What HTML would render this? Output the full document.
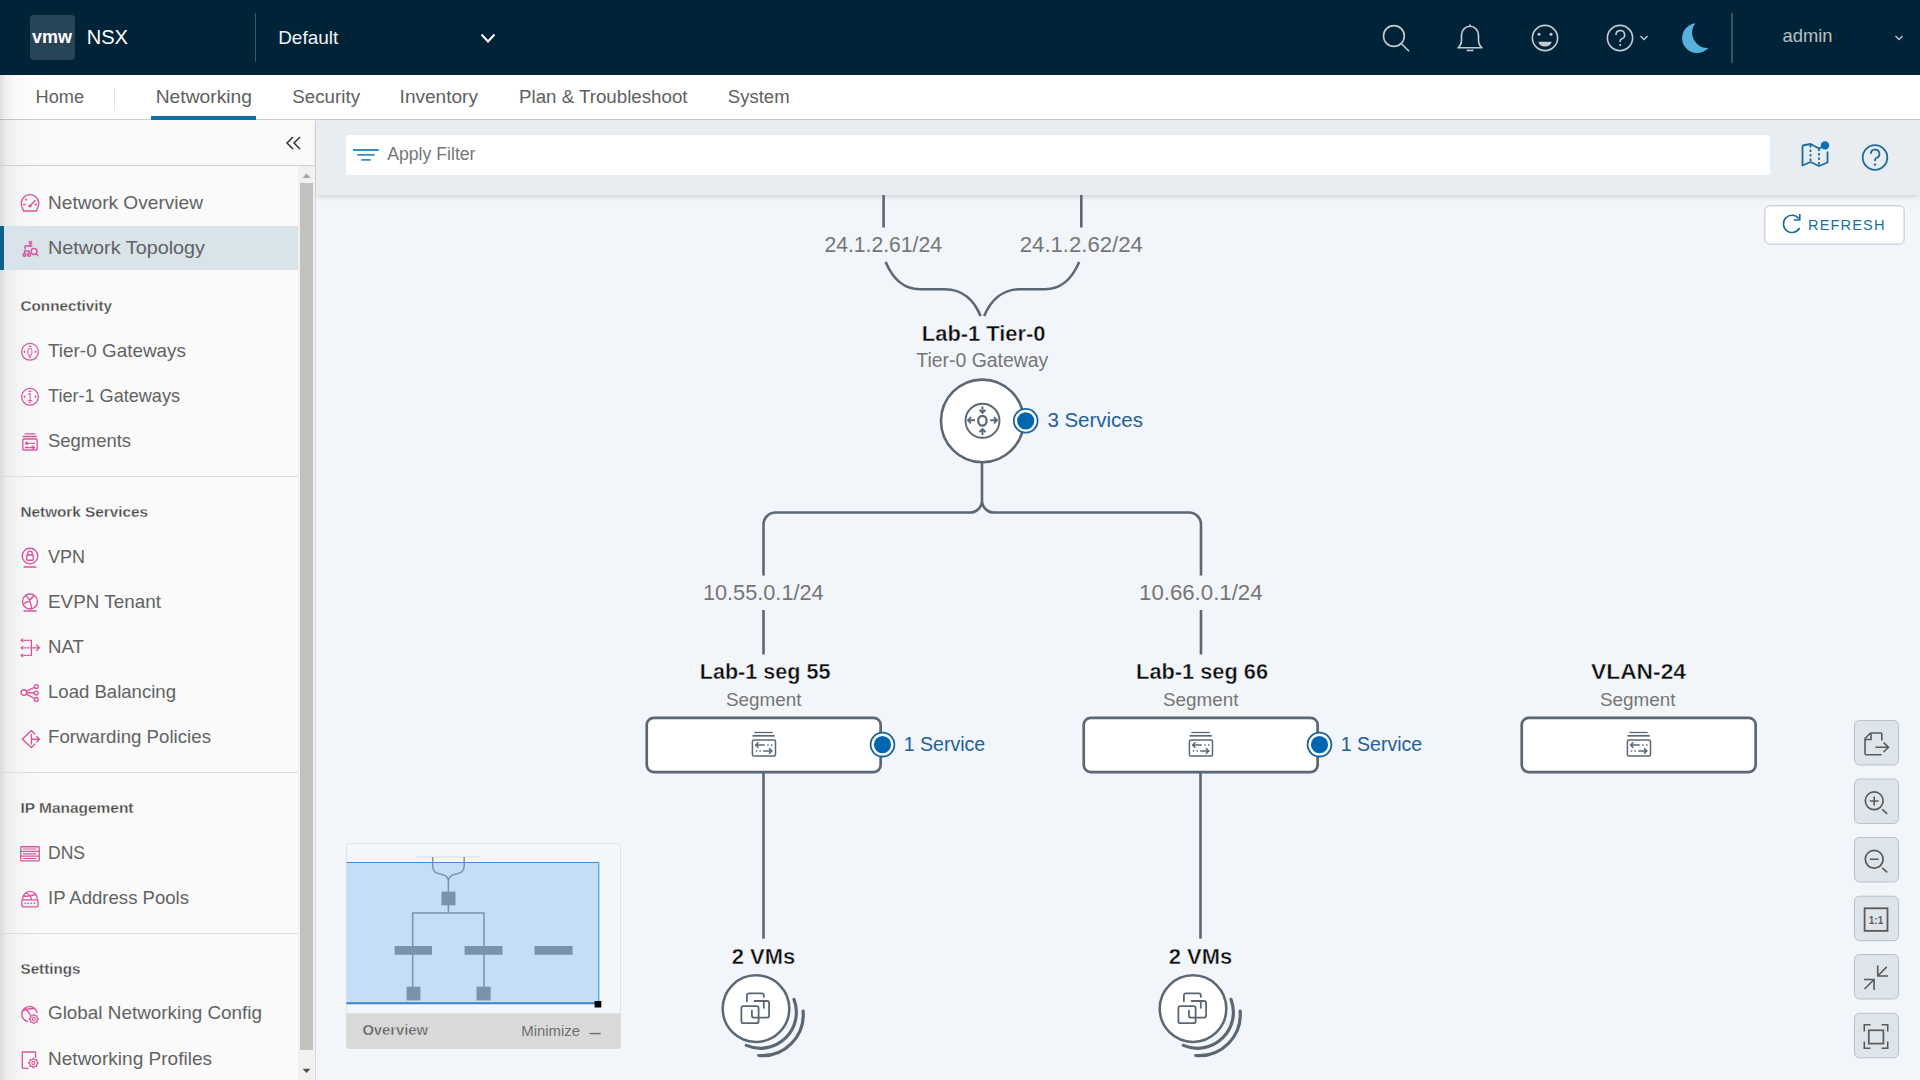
<!DOCTYPE html>
<html><head><meta charset="utf-8">
<style>
html,body{margin:0;padding:0;width:1920px;height:1080px;overflow:hidden;background:#f2f5f9;font-family:"Liberation Sans",sans-serif;}
.abs{position:absolute;}
#hdr{left:0;top:0;width:1920px;height:75px;background:#012337;}
#nav{left:0;top:75px;width:1920px;height:44px;background:#fff;border-bottom:1px solid #c9cdd0;}
#side{left:0;top:120px;width:315px;height:960px;background:#fafafa;}
#sideshadow{left:0;top:75px;width:48px;height:1005px;background:linear-gradient(to right,rgba(0,0,0,0.13) 0px,rgba(0,0,0,0.06) 6px,rgba(0,0,0,0.025) 16px,rgba(0,0,0,0.008) 32px,rgba(0,0,0,0) 48px);}
#sideborder{left:315px;top:120px;width:1px;height:960px;background:#d7dade;}
#filterbar{left:316px;top:120px;width:1604px;height:75px;background:#e7edf0;box-shadow:0 2px 5px rgba(0,0,0,0.13);}
#filterinput{left:346px;top:135px;width:1424px;height:40px;background:#fff;border-radius:2px;}
#canvas{left:316px;top:195px;width:1604px;height:885px;background:#f2f5f9;}
svg{position:absolute;left:0;top:0;}
</style></head>
<body>
<div id="hdr" class="abs"></div>
<div id="nav" class="abs"></div>
<div id="side" class="abs"></div>
<div id="sideborder" class="abs"></div>
<div id="canvas" class="abs"></div>
<div id="filterbar" class="abs"></div>
<div id="filterinput" class="abs"></div>
<div id="sideshadow" class="abs"></div>
<svg width="1920" height="1080" viewBox="0 0 1920 1080" font-family="Liberation Sans, sans-serif">
<!-- HEADER -->
<rect x="30" y="15" width="45" height="45" rx="4" fill="#284558"/>
<text x="32" y="43" font-size="18" font-weight="700" fill="#fff" textLength="40" lengthAdjust="spacingAndGlyphs">vmw</text>
<text x="86.7" y="44" font-size="20" fill="#fff" textLength="41.3" lengthAdjust="spacingAndGlyphs">NSX</text>
<rect x="255" y="13" width="1" height="49" fill="#3d5566"/>
<text x="278.2" y="44" font-size="19" fill="#f0f4f7" textLength="60" lengthAdjust="spacingAndGlyphs">Default</text>
<path d="M481.5 34.5 L488 41.5 L494.5 34.5" fill="none" stroke="#fff" stroke-width="2"/>

<!-- header right icons -->
<g fill="none" stroke="#c3ccd2" stroke-width="1.6">
<circle cx="1393.9" cy="36" r="10.4"/>
<path d="M1401.5 43.8 L1409 51.2"/>
<path d="M1458 47.8 L1482 47.8 Q1478.5 45 1478.5 40 L1478.5 35 A8.5 8.7 0 0 0 1461.5 35 L1461.5 40 Q1461.5 45 1458 47.8 Z" stroke-linejoin="round"/>
<path d="M1467.5 49.5 L1467.5 50.5 L1472.5 50.5 L1472.5 49.5"/>
<path d="M1470 24.5 L1470 26.5"/>
<circle cx="1545" cy="38" r="12.6"/>
<circle cx="1620" cy="38" r="12.6"/>
<path d="M1616 35 A4.3 4.3 0 1 1 1621.5 39 Q1620.2 39.6 1620.2 41 L1620.2 42"/>
<path d="M1640.5 36 L1644 39.5 L1647.5 36" stroke-width="1.3"/>
<path d="M1895.5 36 L1899 39.5 L1902.5 36" stroke-width="1.3"/>
</g>
<circle cx="1539" cy="34.3" r="1.5" fill="#c3ccd2"/>
<circle cx="1551" cy="34.3" r="1.5" fill="#c3ccd2"/>
<path d="M1538.3 41.7 L1551.7 41.7 Q1550.5 46.5 1545 46.5 Q1539.5 46.5 1538.3 41.7 Z" fill="#c3ccd2"/>
<circle cx="1620.2" cy="45" r="1.1" fill="#c3ccd2"/>
<path d="M1695.4 23.2 A15 15 0 1 0 1708.4 47.9 A15.3 15.3 0 0 1 1695.4 23.2 Z" fill="#57b0dd"/>
<rect x="1731" y="13" width="2" height="50" fill="#3b5263"/>
<text x="1782.5" y="42.2" font-size="18.4" fill="#b7c1c7" textLength="50" lengthAdjust="spacingAndGlyphs">admin</text>

<!-- NAV -->
<g font-size="18.8" fill="#606060">
<text x="35.5" y="103" textLength="48.5" lengthAdjust="spacingAndGlyphs">Home</text>
<text x="155.7" y="103" textLength="96.3" lengthAdjust="spacingAndGlyphs">Networking</text>
<text x="292.3" y="103" textLength="67.7" lengthAdjust="spacingAndGlyphs">Security</text>
<text x="399.6" y="103" textLength="78.4" lengthAdjust="spacingAndGlyphs">Inventory</text>
<text x="519" y="103" textLength="168.5" lengthAdjust="spacingAndGlyphs">Plan &amp; Troubleshoot</text>
<text x="727.8" y="103" textLength="61.8" lengthAdjust="spacingAndGlyphs">System</text>
</g>
<rect x="114" y="88" width="1" height="23" fill="#e3e3e3"/>
<rect x="151" y="116" width="105" height="4" fill="#0d72a6"/>

<!-- SIDEBAR -->
<rect x="0" y="165" width="315" height="1" fill="#cfcfcf"/>
<path d="M293 137 L287 143 L293 149 M300 137 L294 143 L300 149" fill="none" stroke="#333" stroke-width="1.5"/>
<rect x="298" y="166" width="17" height="914" fill="#f1f1f1"/>
<rect x="300" y="183" width="13" height="867" fill="#c1c1c1"/>
<path d="M302.5 178 L306.5 173.5 L310.5 178 Z" fill="#a3a3a3"/>
<path d="M302.5 1068.8 L306.5 1073 L310.5 1068.8 Z" fill="#505050"/>
<rect x="4" y="226" width="294" height="44" fill="#d8e3ea"/>
<rect x="0" y="226" width="4" height="44" fill="#0b5f8a"/>
<rect x="0" y="476" width="298" height="1" fill="#dcdcdc"/>
<rect x="0" y="772" width="298" height="1" fill="#dcdcdc"/>
<rect x="0" y="933" width="298" height="1" fill="#dcdcdc"/>
<g font-size="19" fill="#626262">
<text x="48" y="209.2" textLength="155" lengthAdjust="spacingAndGlyphs">Network Overview</text>
<text x="48" y="253.6" textLength="157" lengthAdjust="spacingAndGlyphs">Network Topology</text>
<text x="48" y="357" textLength="138" lengthAdjust="spacingAndGlyphs">Tier-0 Gateways</text>
<text x="48" y="402" textLength="132" lengthAdjust="spacingAndGlyphs">Tier-1 Gateways</text>
<text x="48" y="447" textLength="83" lengthAdjust="spacingAndGlyphs">Segments</text>
<text x="48" y="562.5" textLength="37" lengthAdjust="spacingAndGlyphs">VPN</text>
<text x="48" y="607.5" textLength="113" lengthAdjust="spacingAndGlyphs">EVPN Tenant</text>
<text x="48" y="652.8" textLength="36" lengthAdjust="spacingAndGlyphs">NAT</text>
<text x="48" y="697.5" textLength="128" lengthAdjust="spacingAndGlyphs">Load Balancing</text>
<text x="48" y="743" textLength="163" lengthAdjust="spacingAndGlyphs">Forwarding Policies</text>
<text x="48" y="858.5" textLength="37" lengthAdjust="spacingAndGlyphs">DNS</text>
<text x="48" y="903.6" textLength="141" lengthAdjust="spacingAndGlyphs">IP Address Pools</text>
<text x="48" y="1019.4" textLength="214" lengthAdjust="spacingAndGlyphs">Global Networking Config</text>
<text x="48" y="1064.7" textLength="164" lengthAdjust="spacingAndGlyphs">Networking Profiles</text>
</g>
<g font-size="15.3" font-weight="700" fill="#474747" stroke="#fafafa" stroke-width="0.3">
<text x="20.5" y="311.3" textLength="91.5" lengthAdjust="spacingAndGlyphs">Connectivity</text>
<text x="20.5" y="517" textLength="127.5" lengthAdjust="spacingAndGlyphs">Network Services</text>
<text x="20.5" y="813.3" textLength="113" lengthAdjust="spacingAndGlyphs">IP Management</text>
<text x="20.5" y="974.4" textLength="60" lengthAdjust="spacingAndGlyphs">Settings</text>
</g>


<!-- SIDEBAR ICONS -->
<g fill="none" stroke="#d9559a" stroke-width="1.35" stroke-linecap="round" stroke-linejoin="round">
<!-- gauge -->
<path d="M23.5 211 L22.5 208 A8.8 8.8 0 1 1 37.5 208 L36.5 211 Z"/>
<path d="M30 206 L35 200.5 M23.5 204.5 H25 M35 204.5 H36.5 M25.5 199 L26.5 200"/>
<!-- topology -->
<circle cx="30.5" cy="242.5" r="1.2"/>
<path d="M30.5 243.5 V246 M25 249 V246 H32 M24.5 254 V251 M29 254 V251 M24.5 251 H29"/>
<circle cx="24.5" cy="254.8" r="1.5"/><circle cx="29" cy="254.8" r="1.5"/>
<circle cx="34" cy="251.5" r="3"/><path d="M36.2 253.7 L37.8 255.8"/>
<!-- tier0 / tier1 -->
<circle cx="30" cy="351.8" r="8.4"/>
<circle cx="30" cy="396.8" r="8.4"/>
<!-- segments -->
<path d="M25 433.8 H35 M23.3 436.5 H36.7"/>
<rect x="22.8" y="439" width="14.4" height="11" rx="1"/>
<path d="M27 442 L25.5 443.3 L27 444.6 M25.7 443.3 H30 M31.5 443.3 H34.5 M33 446.2 L34.5 447.5 L33 448.8 M34.3 447.5 H30 M28.5 447.5 H25.5"/>
<!-- vpn -->
<circle cx="30" cy="556" r="7.8"/>
<path d="M24 567 H36"/>
<rect x="26.7" y="555" width="6.6" height="5.2" rx="0.8"/>
<path d="M27.8 555 V553.3 A2.2 2.2 0 0 1 32.2 553.3 V555"/>
<!-- evpn -->
<circle cx="30" cy="601.5" r="7.5"/>
<path d="M24 611 H36 M23.5 604 Q30 601 34 595.5 M26 595.8 Q31 600 31.5 608.8"/>
<!-- nat -->
<path d="M31.4 640.3 V655.4 M31.4 647.8 H39.3 M36.6 645.1 L39.3 647.8 L36.6 650.5"/>
<path d="M21.5 640.3 H31.4 M21.5 647.8 H31.4 M21.5 655.4 H31.4" stroke-dasharray="1.5 1.5"/>
<path d="M22.8 639 L21 640.3 L22.8 641.6 M22.8 646.5 L21 647.8 L22.8 649.1 M22.8 654.1 L21 655.4 L22.8 656.7" stroke-width="1.2"/>
<!-- load balancing -->
<circle cx="23.9" cy="692.5" r="2.8"/>
<circle cx="36.3" cy="686.5" r="1.9"/><circle cx="36.3" cy="693" r="1.9"/><circle cx="36.3" cy="699.4" r="1.9"/>
<path d="M26.7 692.7 H34.4 M26.4 691.2 L34.6 687.3 M26.4 694.2 L34.6 698.5"/>
<!-- forwarding -->
<path d="M34.8 734 L31.4 730.6 L22.3 739.2 L31.4 747.5 L34.8 744.3 M31.4 734.5 V744 M31.4 739.2 H39.5 M36.8 736.5 L39.5 739.2 L36.8 741.9"/>
<!-- dns -->
<rect x="20.8" y="846.7" width="18.4" height="14.2" rx="0.8"/>
<path d="M20.8 851.4 H39.2 M20.8 856.1 H39.2 M23.5 849 H36 M23.5 853.8 H36 M23.5 858.5 H36" stroke-width="1.2"/>
<!-- ip pools -->
<path d="M22.6 899.5 A7.4 8.2 0 0 1 37.4 899.5"/>
<rect x="21.8" y="899.8" width="16.3" height="7" rx="1.5"/>
<path d="M23.8 896 Q29 896.8 35.5 894.5 M26.3 893 Q30.5 895 31.5 899.5"/>
<!-- global net config -->
<path d="M36.8 1012.5 A7.6 7.6 0 1 0 27.5 1021.5"/>
<path d="M22.8 1011 Q27 1008.5 34.5 1008.5 M25.3 1008 Q28.5 1012 30.5 1015"/>
<path d="M38.40 1019.00 L36.94 1020.30 L37.05 1022.25 L35.10 1022.14 L33.80 1023.60 L32.50 1022.14 L30.55 1022.25 L30.66 1020.30 L29.20 1019.00 L30.66 1017.70 L30.55 1015.75 L32.50 1015.86 L33.80 1014.40 L35.10 1015.86 L37.05 1015.75 L36.94 1017.70 Z" stroke-width="1.2"/>
<circle cx="33.8" cy="1019" r="1.5" stroke-width="1.1"/>
<!-- networking profiles -->
<path d="M28 1068.3 H23 Q22.3 1068.3 22.3 1067.6 V1052.7 Q22.3 1052 23 1052 H34.9 Q35.6 1052 35.6 1052.7 V1057.5"/>
<path d="M38.20 1063.00 L36.63 1064.34 L36.79 1066.39 L34.74 1066.23 L33.40 1067.80 L32.06 1066.23 L30.01 1066.39 L30.17 1064.34 L28.60 1063.00 L30.17 1061.66 L30.01 1059.61 L32.06 1059.77 L33.40 1058.20 L34.74 1059.77 L36.79 1059.61 L36.63 1061.66 Z" stroke-width="1.2"/>
<circle cx="33.4" cy="1063" r="1.5" stroke-width="1.1"/>
</g>
<g fill="#d9559a">
<circle cx="30" cy="206" r="1.6"/>
<path d="M30 345 L28.3 347 H31.7 Z M30 358.6 L28.3 356.6 H31.7 Z M23.2 351.8 L25.2 350.1 V353.5 Z M36.8 351.8 L34.8 350.1 V353.5 Z"/>
<path d="M30 390 L28.3 392 H31.7 Z M30 403.6 L28.3 401.6 H31.7 Z M23.2 396.8 L25.2 395.1 V398.5 Z M36.8 396.8 L34.8 395.1 V398.5 Z"/>
<rect x="24.5" y="902.6" width="1.6" height="1.5"/><rect x="27.5" y="902.6" width="1.6" height="1.5"/><rect x="30.5" y="902.6" width="1.6" height="1.5"/><rect x="33.5" y="902.6" width="1.6" height="1.5"/>
</g>
<text x="30" y="355.6" text-anchor="middle" font-size="10.5" fill="#d9559a">0</text>
<text x="30" y="400.6" text-anchor="middle" font-size="10.5" fill="#d9559a">1</text>

<!-- DIAGRAM -->
<defs>
<g id="segicon" fill="none" stroke="#5b6873" stroke-width="1.5">
<path d="M754.3 732.5 H772.7" stroke-width="1.3"/>
<path d="M752.5 735.8 H774.8" stroke-width="1.7"/>
<rect x="752.4" y="740" width="23.1" height="16" rx="1.5"/>
<path d="M758.4 742.2 L755.6 745 L758.4 747.8 M755.8 745 H764.7 M767.3 745 H768.7 M771 745 H772.4"/>
<path d="M769 748.2 L771.8 751 L769 753.8 M771.6 751 H763.2 M760.9 751 H759.5 M757.2 751 H755.8"/>
</g>
<g id="svcdot">
<circle cx="882.5" cy="744.6" r="11.9" fill="#fff" stroke="#17629e" stroke-width="1.8"/>
<circle cx="882.5" cy="744.6" r="8.6" fill="#0066b2"/>
</g>
<g id="vmnode">
<path d="M763.5 773 V938.7" fill="none" stroke="#5b6873" stroke-width="2.6"/>
<text x="763.5" y="964.2" text-anchor="middle" font-size="21.9" font-weight="700" fill="#0b0b0b" stroke="#f2f5f9" stroke-width="0.4" textLength="63.4" lengthAdjust="spacingAndGlyphs">2 VMs</text>
<circle cx="756" cy="1008.6" r="33.3" fill="#fff" stroke="#5b6873" stroke-width="2.5"/>
<path d="M794.0 999.4 A36.0 36.0 0 0 1 746.3 1045.4" fill="none" stroke="#5b6873" stroke-width="3.2" stroke-linecap="round"/>
<path d="M803.1 1011.0 A41 41 0 0 1 758.7 1055.5" fill="none" stroke="#5b6873" stroke-width="3.2" stroke-linecap="round"/>
<g fill="none" stroke="#5b6873" stroke-width="1.8" stroke-linecap="round">
<path d="M746.9 1001.3 V995.4 Q746.9 993.4 748.9 993.4 H761.8 Q763.8 993.4 763.8 995.4 V996.9 M763.8 1001.3 V1007.8"/>
<path d="M754.5 1001 H767.1 Q769.1 1001 769.1 1003 V1015.6 Q769.1 1017.6 767.1 1017.6 H753.9 Q751.9 1017.6 751.9 1015.6 V1010.6"/>
<rect x="741.4" y="1006.1" width="17.2" height="17.1" rx="2"/>
</g>
</g>
</defs>

<g fill="none" stroke="#5b6873" stroke-width="2.6">
<path d="M883.6 195 V227.5 M1081.3 195 V227.5"/>
<path d="M885.6 262 C 893 279 903 289.2 920 289.2 L 945 289.2 C 962 289.2 974 300 980.6 316"/>
<path d="M1079.2 262 C 1071.8 279 1061.8 289.2 1044.8 289.2 L 1019.8 289.2 C 1002.8 289.2 990.8 300 984.2 316"/>
<path d="M763.5 575.4 V524.5 A12 12 0 0 1 775.5 512.5 H970 A12 12 0 0 0 982 500.5 V463 M1201 575.4 V524.5 A12 12 0 0 0 1189 512.5 H994 A12 12 0 0 1 982 500.5"/>
<path d="M763.5 610 V654.5 M1201 610 V654.5"/>
</g>
<g font-size="21.7" fill="#767676" text-anchor="middle">
<text x="883.2" y="251.9" textLength="117.6" lengthAdjust="spacingAndGlyphs">24.1.2.61/24</text>
<text x="1081.3" y="251.9" textLength="123" lengthAdjust="spacingAndGlyphs">24.1.2.62/24</text>
<text x="763.3" y="599.7" textLength="120.8" lengthAdjust="spacingAndGlyphs">10.55.0.1/24</text>
<text x="1200.8" y="599.7" textLength="123.5" lengthAdjust="spacingAndGlyphs">10.66.0.1/24</text>
</g>
<text x="983.7" y="341" text-anchor="middle" font-size="21.9" font-weight="700" fill="#0b0b0b" stroke="#f2f5f9" stroke-width="0.4" textLength="123.7" lengthAdjust="spacingAndGlyphs">Lab-1 Tier-0</text>
<text x="982.3" y="366.6" text-anchor="middle" font-size="19.4" fill="#767676" textLength="132" lengthAdjust="spacingAndGlyphs">Tier-0 Gateway</text>
<circle cx="982.3" cy="420.9" r="41.3" fill="#fff" stroke="#5b6873" stroke-width="2.6"/>
<g fill="none" stroke="#5b6873" stroke-width="1.9">
<circle cx="982.5" cy="420.8" r="17"/>
<ellipse cx="982.4" cy="420.8" rx="4.2" ry="4.9" stroke-width="2.3"/>
<path d="M982.5 406.6 V412.5 M979.5 409.8 L982.5 412.8 L985.5 409.8"/>
<path d="M982.5 435 V429.2 M979.5 432 L982.5 429 L985.5 432"/>
<path d="M968.2 420.3 H975 M971 417.2 L968 420.3 L971 423.4"/>
<path d="M996.8 420.3 H990.2 M994 417.2 L997 420.3 L994 423.4"/>
</g>
<use href="#svcdot" transform="translate(143.2,-323.8)"/>
<text x="1047.4" y="426.6" font-size="20.4" fill="#1f5f9b" textLength="95.6" lengthAdjust="spacingAndGlyphs">3 Services</text>

<g font-size="21.6" font-weight="700" fill="#0b0b0b" text-anchor="middle" stroke="#f2f5f9" stroke-width="0.4">
<text x="765.1" y="679.1" textLength="130.6" lengthAdjust="spacingAndGlyphs">Lab-1 seg 55</text>
<text x="1202.1" y="679.1" textLength="132" lengthAdjust="spacingAndGlyphs">Lab-1 seg 66</text>
<text x="1638.5" y="679.1" textLength="95" lengthAdjust="spacingAndGlyphs">VLAN-24</text>
</g>
<g font-size="18.9" fill="#767676" text-anchor="middle">
<text x="763.7" y="705.9" textLength="75.5" lengthAdjust="spacingAndGlyphs">Segment</text>
<text x="1200.7" y="705.9" textLength="75.5" lengthAdjust="spacingAndGlyphs">Segment</text>
<text x="1637.7" y="705.9" textLength="75.5" lengthAdjust="spacingAndGlyphs">Segment</text>
</g>
<g fill="#fff" stroke="#5b6873" stroke-width="2.7">
<rect x="646.75" y="717.85" width="233.9" height="54.2" rx="7"/>
<rect x="1083.75" y="717.85" width="233.9" height="54.2" rx="7"/>
<rect x="1521.75" y="717.85" width="233.9" height="54.2" rx="7"/>
</g>
<use href="#segicon"/>
<use href="#segicon" transform="translate(437,0)"/>
<use href="#segicon" transform="translate(875,0)"/>
<use href="#svcdot"/>
<use href="#svcdot" transform="translate(437,0)"/>
<g font-size="19.6" fill="#1f5f9b">
<text x="903.7" y="750.8" textLength="81.5" lengthAdjust="spacingAndGlyphs">1 Service</text>
<text x="1340.7" y="750.8" textLength="81.5" lengthAdjust="spacingAndGlyphs">1 Service</text>
</g>
<use href="#vmnode"/>
<use href="#vmnode" transform="translate(437,0)"/>

<!-- FILTER -->
<g stroke="#3490c2" stroke-width="1.9">
<path d="M353 150 H378.8 M357.2 154.9 H374.6 M361.3 159.9 H370.8"/>
</g>
<text x="387.2" y="159.7" font-size="17.6" fill="#777" textLength="88.3" lengthAdjust="spacingAndGlyphs">Apply Filter</text>
<g fill="none" stroke="#1b6c9a" stroke-width="1.8" stroke-linejoin="round">
<path d="M1802.5 145.5 V165.5 L1810.5 162 L1819 166 L1827.5 162.5 V151.5"/>
<path d="M1802.5 145.5 L1810.5 144 L1819 148.5 L1822 147"/>
<path d="M1810.5 145 V162 M1819 148.5 V166" stroke-dasharray="2.5 2"/>
<circle cx="1875" cy="157.5" r="12.3"/>
<path d="M1870.8 153.8 A4.3 4.3 0 1 1 1876.2 158 Q1875 158.6 1875 160 L1875 161"/>
</g>
<circle cx="1825" cy="145.4" r="4.2" fill="#0b6fb6"/>
<circle cx="1875" cy="164.6" r="1.2" fill="#1b6c9a"/>

<!-- REFRESH -->
<rect x="1764.9" y="205.8" width="139.2" height="38.3" rx="4.5" fill="#fff" stroke="#b8c4cb" stroke-width="1"/>
<g fill="none" stroke="#1a6d9b" stroke-width="1.6">
<path d="M1798.8 218.5 A8.6 8.6 0 1 0 1799.6 228"/>
<path d="M1799.8 214 V220 H1793.8"/>
</g>
<text x="1808" y="230" font-size="14.6" fill="#1a6d9b" letter-spacing="1.5" textLength="78" lengthAdjust="spacing">REFRESH</text>

<!-- ZOOM CONTROLS -->
<g fill="#dde4ea" stroke="#b7c1c8" stroke-width="1">
<rect x="1854.5" y="720.5" width="44" height="44.5" rx="5"/>
<rect x="1854.5" y="779" width="44" height="44.5" rx="5"/>
<rect x="1854.5" y="837.5" width="44" height="44.5" rx="5"/>
<rect x="1854.5" y="896.2" width="44" height="44.5" rx="5"/>
<rect x="1854.5" y="954.5" width="44" height="44.5" rx="5"/>
<rect x="1854.5" y="1013.3" width="44" height="44.5" rx="5"/>
</g>
<g fill="none" stroke="#5a5a5a" stroke-width="1.8">
<path d="M1870.5 733 H1880.8 Q1881.8 733 1881.8 734 V740.5 M1870.5 733 L1865 738.5 V753.5 Q1865 754.8 1866.3 754.8 H1881.5 M1865 739.5 H1871 V733" stroke-width="1.6"/>
<path d="M1875.5 747.3 H1888.5 M1883.5 742.5 L1888.5 747.3 L1883.5 752" stroke-width="1.6"/>
<circle cx="1874.2" cy="800.8" r="8.9" stroke-width="1.7"/>
<path d="M1882.3 809.3 L1887.2 813.8 M1869.8 801 H1878.7 M1874.2 796.6 V805.5" stroke-width="1.6"/>
<circle cx="1874.2" cy="859.3" r="8.9" stroke-width="1.7"/>
<path d="M1882.3 867.8 L1887.2 872.3 M1869.8 859.3 H1878.7" stroke-width="1.6"/>
<rect x="1864.6" y="908.3" width="22.9" height="22.6"/>
<path d="M1886.7 966.9 L1877.7 976 M1877.7 965.4 V976 H1888 M1864.5 989 L1874.1 979.5 M1864 979.5 H1874.1 V989.9" stroke-width="1.6"/>
<path d="M1864.3 1031.5 V1024.8 H1870.5 M1881.5 1024.8 H1887.7 V1031.5 M1887.7 1041.5 V1048.2 H1881.5 M1870.5 1048.2 H1864.3 V1041.5" stroke-width="1.6"/>
<rect x="1868.8" y="1030.3" width="14.6" height="13.3" stroke-width="1.7"/>
</g>
<text x="1876" y="923.8" text-anchor="middle" font-size="10" font-weight="700" fill="#5f5f5f">1:1</text>

<!-- OVERVIEW -->
<rect x="346.5" y="843.5" width="274" height="205" rx="3" fill="#f3f6fa" stroke="#e0e4e8" stroke-width="1"/>
<path d="M346.5 1013.2 H620.5 V1046 Q620.5 1049 617.5 1049 H349.5 Q346.5 1049 346.5 1046 Z" fill="#d9d9d9"/>
<rect x="346.5" y="862" width="252.5" height="142" fill="#c4def8"/>
<path d="M346.5 862.5 H598.8 V1003.5" fill="none" stroke="#3d8ddb" stroke-width="1"/>
<path d="M346.5 1003.2 H598.5" fill="none" stroke="#2d86d6" stroke-width="2"/>
<g fill="none" stroke="#7a93ab" stroke-width="1.5">
<path d="M416.5 857 H480" stroke="#d9dde2" stroke-width="1"/>
<path d="M432.7 857 V866 Q432.7 873 440 874 Q448 875 448.4 881 Q448.8 875 456 874 Q464.2 873 464.2 866 V857"/>
<path d="M448.4 880 V892 M448.4 905 V913 M412.7 954 V913 H484 V954 M412.7 954 V987 M484 954 V987"/>
</g>
<g fill="#7a93ab">
<rect x="441.4" y="891.6" width="14.1" height="13.7"/>
<rect x="394.6" y="946" width="37.4" height="8.8"/>
<rect x="464.6" y="946" width="37.9" height="8.8"/>
<rect x="534.5" y="946" width="38.1" height="8.8"/>
<rect x="406.6" y="986.7" width="13.8" height="13.7"/>
<rect x="476.5" y="986.7" width="14.2" height="13.7"/>
</g>
<rect x="594.6" y="1001" width="6.7" height="6.5" fill="#000"/>
<text x="362.4" y="1035" font-size="14.7" font-weight="700" fill="#555" stroke="#d9d9d9" stroke-width="0.5" textLength="65.6" lengthAdjust="spacingAndGlyphs">Overview</text>
<text x="521.3" y="1035.5" font-size="14.9" fill="#6f6f6f" textLength="58.7" lengthAdjust="spacingAndGlyphs">Minimize</text>
<path d="M589.5 1033.6 H600.7" stroke="#6f6f6f" stroke-width="1.4"/>
</svg>
</body></html>
